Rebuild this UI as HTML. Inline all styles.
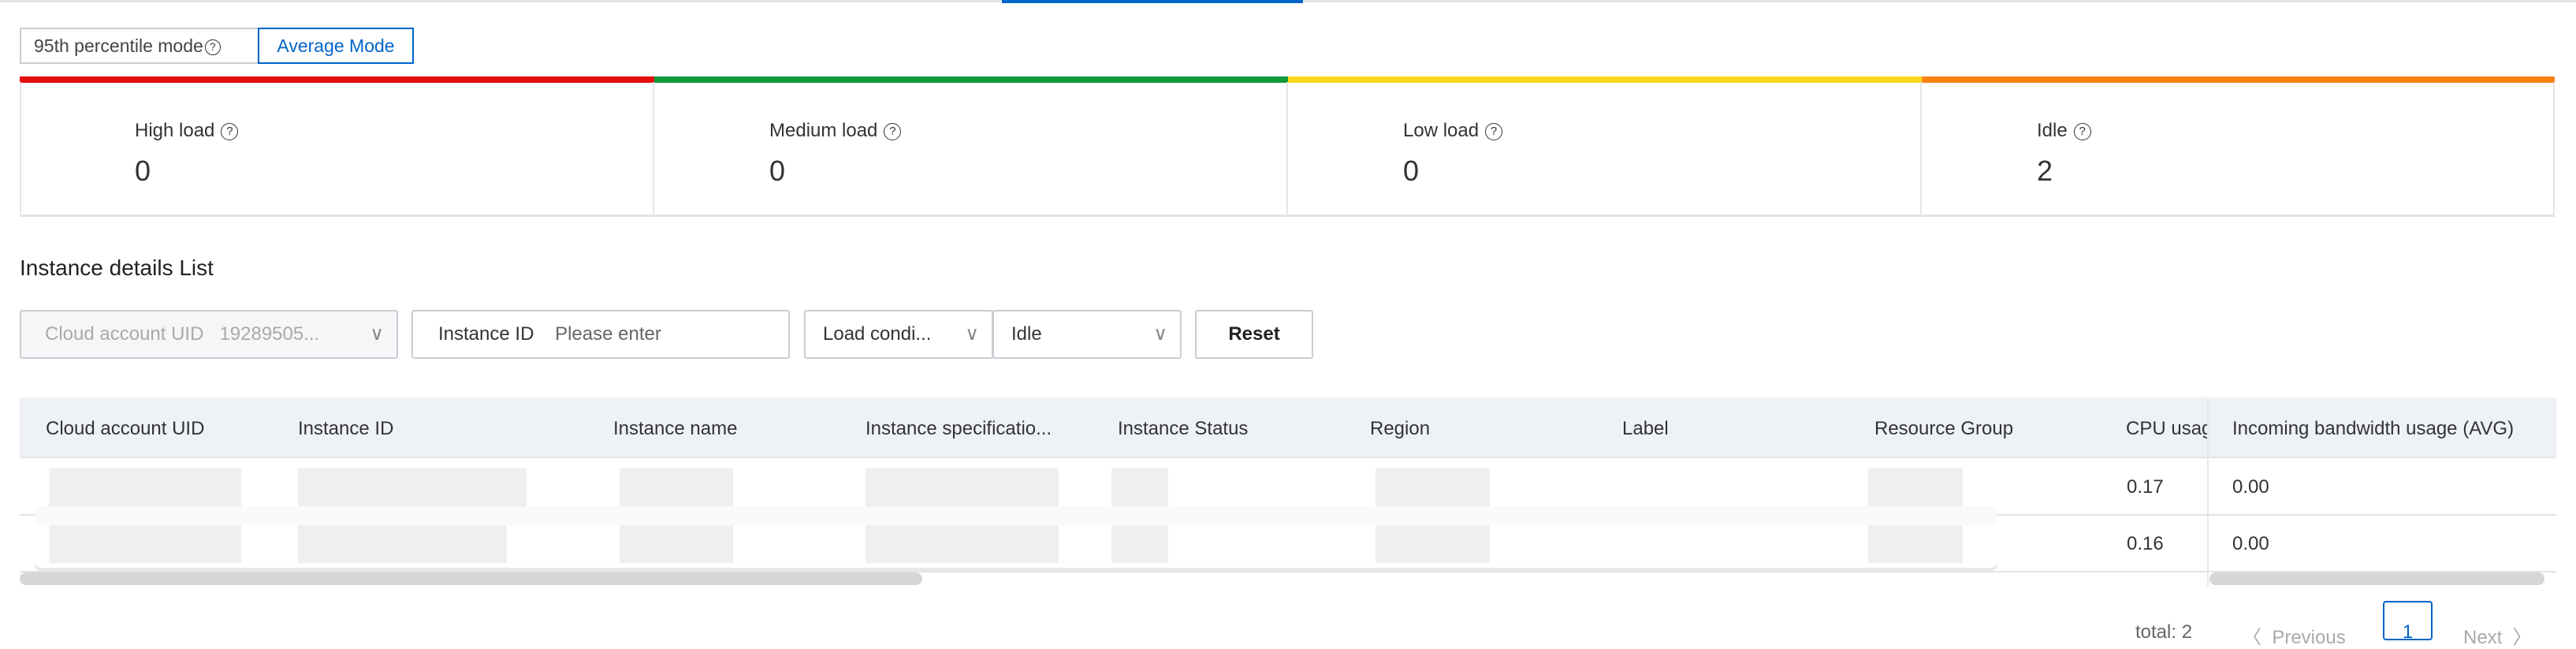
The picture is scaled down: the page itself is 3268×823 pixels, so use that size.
<!DOCTYPE html>
<html><head><meta charset="utf-8"><style>
*{box-sizing:border-box;margin:0;padding:0}
body{width:3268px;height:798px;background:#fff;font-family:"Liberation Sans",Arial,sans-serif;color:#333;position:relative;overflow:hidden;font-size:24px}
.a{position:absolute}
.q{display:inline-block;width:22px;height:22px;border:1.5px solid #333;border-radius:50%;font-size:15px;line-height:19px;text-align:center;vertical-align:middle;margin-left:8px}
.card{position:absolute;top:104px;height:171px;border-right:2px solid #e5e5e5;border-bottom:3px solid #e5e5e5}
.card .l{position:absolute;left:146px;top:48px;font-size:24px}
.card .v{position:absolute;left:146px;top:92px;font-size:36px}
.box{position:absolute;top:393px;height:62px;border:2px solid #c9cdd4;border-radius:3px;font-size:24px;line-height:58px;padding-left:30px}
.chev{position:absolute;right:16px;top:0;color:#888;font-size:24px}
.th{position:absolute;top:530px;font-size:24px}
.p{position:absolute;background:#efefef}
.c{position:absolute;font-size:24px}
</style></head><body>
<div class="a" style="left:0;top:0;width:3268px;height:3px;background:#e3e3e3"></div>
<div class="a" style="left:1271px;top:0;width:382px;height:4px;background:#0064c8"></div>

<div class="a" style="left:25px;top:35px;width:302px;height:46px;border:2px solid #c9cdd4;border-right:none;line-height:42px;padding-left:16px;font-size:23px;color:#444">95th percentile mode<span class="q" style="width:20px;height:20px;font-size:14px;line-height:17px;margin-left:2px">?</span></div>
<div class="a" style="left:327px;top:35px;width:198px;height:46px;border:2px solid #0064c8;line-height:42px;text-align:center;font-size:23px;color:#0064c8">Average Mode</div>

<div class="a" style="left:25px;top:97px;width:805px;height:8px;background:#e30e0e"></div>
<div class="a" style="left:830px;top:97px;width:804px;height:8px;background:#129a3a"></div>
<div class="a" style="left:1634px;top:97px;width:804px;height:8px;background:#fcd81e"></div>
<div class="a" style="left:2438px;top:97px;width:803px;height:8px;background:#fa8214"></div>
<div class="a" style="left:25px;top:104px;width:2px;height:171px;background:#e5e5e5"></div>
<div class="card" style="left:25px;width:805px"><div class="l">High load<span class="q">?</span></div><div class="v">0</div></div>
<div class="card" style="left:830px;width:804px"><div class="l">Medium load<span class="q">?</span></div><div class="v">0</div></div>
<div class="card" style="left:1634px;width:804px"><div class="l">Low load<span class="q">?</span></div><div class="v">0</div></div>
<div class="card" style="left:2438px;width:803px"><div class="l">Idle<span class="q">?</span></div><div class="v">2</div></div>

<div class="a" style="left:25px;top:324px;font-size:28px;color:#222">Instance details List</div>

<div class="box" style="left:25px;width:480px;background:#f5f6f8;color:#aaa">Cloud account UID&nbsp;&nbsp;&nbsp;19289505...<span class="chev">∨</span></div>
<div class="box" style="left:522px;width:480px;padding-left:32px">Instance ID&nbsp;&nbsp;&nbsp;&nbsp;<span style="color:#666">Please enter</span></div>
<div class="box" style="left:1020px;width:240px;padding-left:22px">Load condi...<span class="chev">∨</span></div>
<div class="box" style="left:1259px;width:240px;padding-left:22px">Idle<span class="chev">∨</span></div>
<div class="box" style="left:1516px;width:150px;padding-left:0;text-align:center;font-weight:bold;color:#222">Reset</div>

<div class="a" style="left:25px;top:504px;width:3218px;height:77px;background:#eef1f6;border-bottom:2px solid #dfe2e6"></div>
<div class="th" style="left:58px">Cloud account UID</div>
<div class="th" style="left:378px">Instance ID</div>
<div class="th" style="left:778px">Instance name</div>
<div class="th" style="left:1098px">Instance specificatio...</div>
<div class="th" style="left:1418px">Instance Status</div>
<div class="th" style="left:1738px">Region</div>
<div class="th" style="left:2058px">Label</div>
<div class="th" style="left:2378px">Resource Group</div>
<div class="th" style="left:2697px;width:103px;overflow:hidden;white-space:nowrap">CPU usage</div>
<div class="a" style="left:2800px;top:504px;width:2px;height:240px;background:#e6e8eb"></div>
<div class="th" style="left:2832px">Incoming bandwidth usage (AVG)</div>

<div class="a" style="left:25px;top:652px;width:3218px;height:2px;background:#e3e3e3"></div>
<div class="a" style="left:25px;top:724px;width:3218px;height:2px;background:#e3e3e3"></div>
<div class="a" style="left:44px;top:590px;width:2490px;height:130px;background:#fff;border-radius:8px;box-shadow:0 4px 0 #e8e8e8"></div>
<div class="a" style="left:44px;top:642px;width:2490px;height:24px;background:#fafafa"></div>
<div class="p" style="left:62px;top:594px;width:244px;height:48px"></div>
<div class="p" style="left:62px;top:666px;width:244px;height:48px"></div>
<div class="p" style="left:378px;top:594px;width:290px;height:48px"></div>
<div class="p" style="left:378px;top:666px;width:265px;height:48px"></div>
<div class="p" style="left:786px;top:594px;width:144px;height:48px"></div>
<div class="p" style="left:786px;top:666px;width:144px;height:48px"></div>
<div class="p" style="left:1098px;top:594px;width:245px;height:48px"></div>
<div class="p" style="left:1098px;top:666px;width:245px;height:48px"></div>
<div class="p" style="left:1410px;top:594px;width:72px;height:48px"></div>
<div class="p" style="left:1410px;top:666px;width:72px;height:48px"></div>
<div class="p" style="left:1745px;top:594px;width:145px;height:48px"></div>
<div class="p" style="left:1745px;top:666px;width:145px;height:48px"></div>
<div class="p" style="left:2370px;top:594px;width:120px;height:48px"></div>
<div class="p" style="left:2370px;top:666px;width:120px;height:48px"></div>

<div class="c" style="left:2698px;top:604px">0.17</div>
<div class="c" style="left:2832px;top:604px">0.00</div>
<div class="c" style="left:2698px;top:676px">0.16</div>
<div class="c" style="left:2832px;top:676px">0.00</div>

<div class="a" style="left:25px;top:726px;width:1145px;height:16px;background:#d6d6d6;border-radius:8px"></div>
<div class="a" style="left:2803px;top:726px;width:425px;height:16px;background:#d6d6d6;border-radius:8px"></div>

<div class="a" style="left:2709px;top:788px;color:#666">total: 2</div>
<div class="a" style="left:2845px;top:788px;color:#aaa">〈&nbsp;&nbsp;Previous</div>
<div class="a" style="left:3023px;top:762px;width:63px;height:50px;border:2px solid #0064c8;border-radius:4px;color:#0064c8;text-align:center;padding-top:24px">1</div>
<div class="a" style="left:3125px;top:788px;color:#aaa">Next&nbsp;&nbsp;〉</div>
</body></html>
